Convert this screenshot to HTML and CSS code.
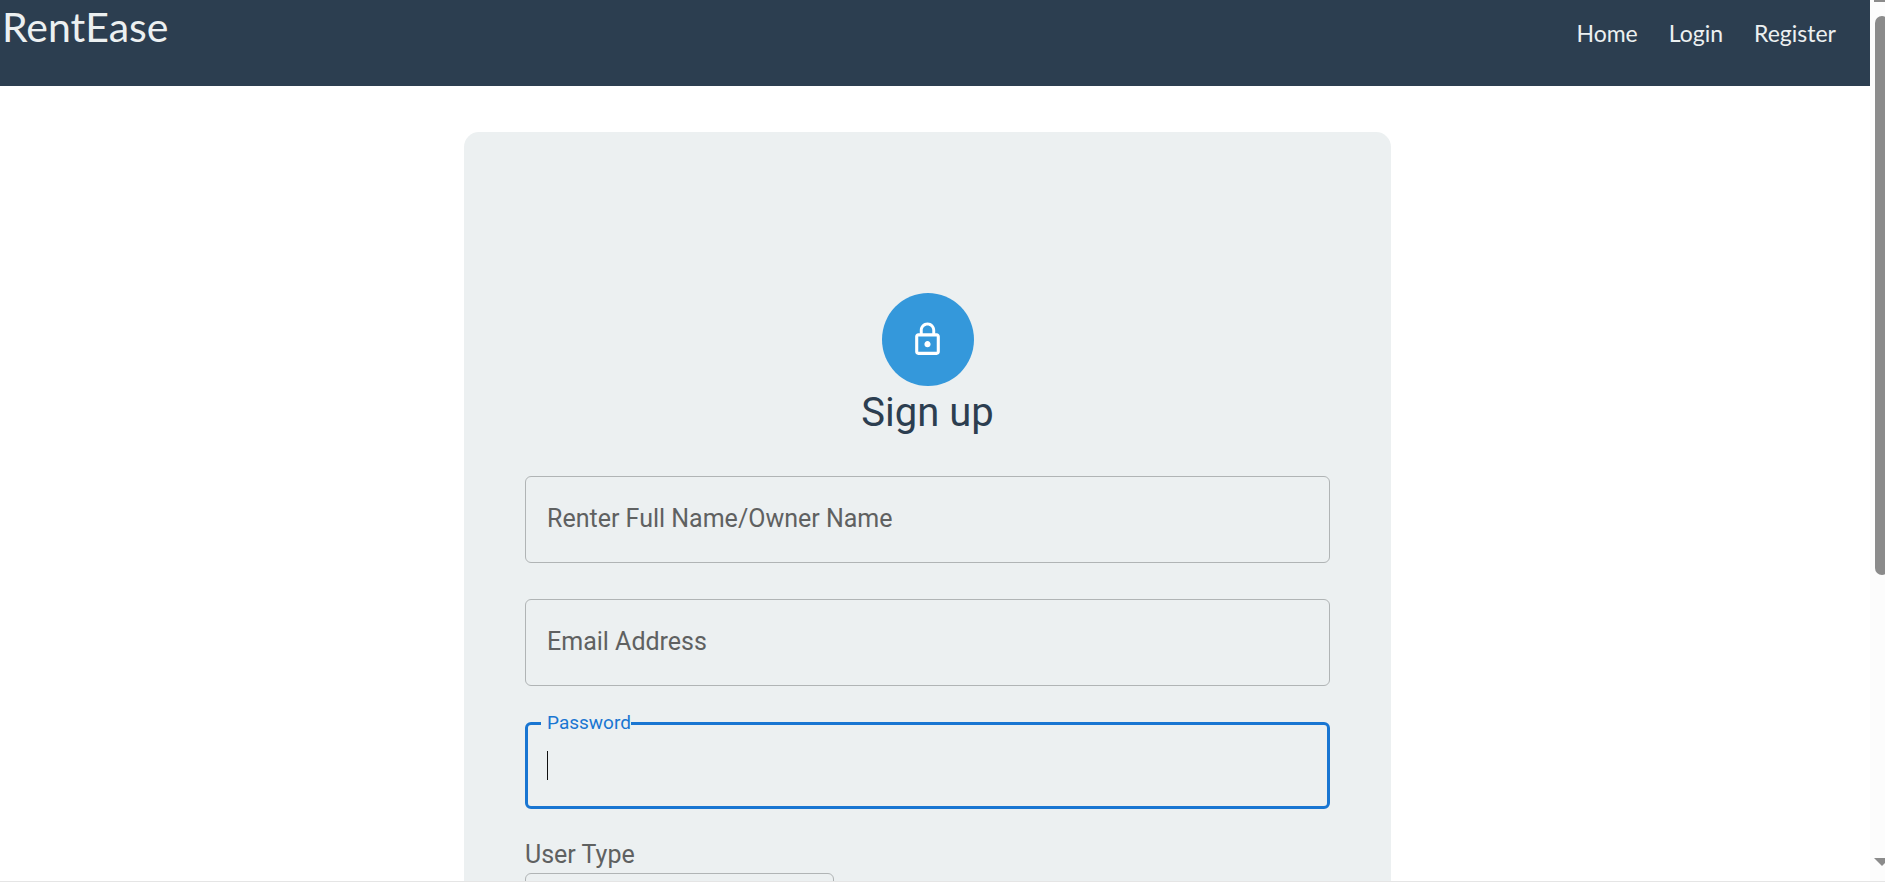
FILE: index.html
```html
<!DOCTYPE html>
<html lang="en">
<head>
<meta charset="utf-8">
<meta name="viewport" content="width=device-width, initial-scale=1">
<title>RentEase</title>
<link rel="stylesheet" href="styles.css">
</head>
<body>
<div class="page">
  <header class="header">
    <div class="brand">RentEase</div>
    <nav class="nav">
      <a href="#home">Home</a>
      <a href="#login">Login</a>
      <a href="#register">Register</a>
    </nav>
  </header>
  <main class="main">
    <form class="card">
      <div class="avatar">
        <svg viewBox="0 0 24 24" aria-hidden="true"><path d="M12 17c1.1 0 2-.9 2-2s-.9-2-2-2-2 .9-2 2 .9 2 2 2zm6-9h-1V6c0-2.760-2.240-5-5-5S7 3.240 7 6v2H6c-1.100 0-2 .9-2 2v10c0 1.100.9 2 2 2h12c1.100 0 2-.9 2-2V10c0-1.100-.9-2-2-2zM8.900 6c0-1.710 1.390-3.100 3.100-3.100s3.100 1.390 3.100 3.100v2H8.900V6zM18 20H6V10h12v10z"/></svg>
      </div>
      <h1 class="title">Sign up</h1>
      <div class="fields">
        <div class="field">
          <label class="field-label" for="name">Renter Full Name/Owner Name</label>
          <input class="field-input" id="name" type="text">
        </div>
        <div class="field">
          <label class="field-label" for="email">Email Address</label>
          <input class="field-input" id="email" type="email">
        </div>
        <div class="field field-active">
          <label class="field-label" for="password">Password</label>
          <input class="field-input" id="password" type="password">
          <span class="caret"></span>
        </div>
      </div>
      <label class="select-label" for="user-type">User Type</label>
      <select class="select" id="user-type"><option></option></select>
    </form>
  </main>
</div>
<div class="scrollbar" aria-hidden="true">
  <div class="scroll-up"></div>
  <div class="scroll-thumb"></div>
  <svg class="scroll-down" viewBox="0 0 16 8"><path d="M0 0h16L8 8z"/></svg>
</div>
</body>
</html>
```
FILE: styles.css
```css
* {
  box-sizing: border-box;
}

body {
  margin: 0;
  height: 100vh;
  display: flex;
  overflow: hidden;
  background: #fff;
  border-bottom: 1px solid #e5e5e5;
  font-family: Roboto, "Liberation Sans", sans-serif;
  color: #2c3e50;
}

.page {
  flex: 1;
  min-width: 0;
  overflow: hidden;
}

.header {
  display: flex;
  justify-content: space-between;
  align-items: flex-start;
  padding: 0 34px 32px 2px;
  background: #2c3e50;
  color: #ecf0f1;
  font-family: "Gill Sans", "Gill Sans MT", Lato, sans-serif;
}

.brand {
  font-size: 41px;
  line-height: 54px;
}

.nav {
  display: flex;
  gap: 31px;
  padding-top: 16px;
  font-size: 23px;
  line-height: 34px;
}

.nav a {
  color: inherit;
  text-decoration: none;
}

.main {
  padding: 46px 31px 46px 16px;
}

.card {
  max-width: 927px;
  margin: 0 auto;
  padding: 161px 61px 61px;
  border-radius: 15px;
  background: #ecf0f1;
}

.avatar {
  display: flex;
  align-items: center;
  justify-content: center;
  width: 92px;
  height: 93px;
  margin: 0 auto;
  border-radius: 50%;
  background: #3498db;
}

.avatar svg {
  width: 37px;
  height: 37px;
  fill: #fff;
}

.title {
  margin: 0 0 37px;
  font-size: 40px;
  font-weight: 400;
  line-height: 53px;
  text-align: center;
}

.fields {
  display: grid;
  gap: 36px;
}

.field {
  position: relative;
}

.field-input {
  display: block;
  width: 100%;
  height: 87px;
  padding: 0 22px;
  border: 1px solid #b0b4b5;
  border-radius: 6px;
  outline: none;
  background: transparent;
  font: inherit;
  font-size: 25px;
}

.field-label {
  position: absolute;
  left: 22px;
  top: 25px;
  font-size: 25px;
  line-height: 36px;
  color: #5f6161;
}

.field-active .field-input {
  border: 3px solid #1976d2;
}

.field-active .field-label {
  left: 16px;
  top: -11px;
  padding-left: 6px;
  background: #ecf0f1;
  font-size: 19px;
  line-height: 24px;
  color: #1976d2;
}

.caret {
  position: absolute;
  left: 22px;
  top: 29px;
  width: 1px;
  height: 29px;
  background: #111;
}

.select-label {
  display: block;
  margin-top: 28px;
  font-size: 25px;
  line-height: 36px;
  color: #5f6161;
}

.select {
  display: block;
  width: 309px;
  height: 87px;
  appearance: none;
  border: 1px solid #b0b4b5;
  border-radius: 6px;
  background: transparent;
}

.scrollbar {
  display: flex;
  flex-direction: column;
  width: 15px;
  padding-left: 4px;
  overflow: hidden;
  background: #fcfcfc;
}

.scroll-up {
  width: 16px;
  height: 2px;
  background: #8b8b8b;
}

.scroll-thumb {
  width: 14px;
  height: 63.4%;
  margin: 14px 0 auto 1px;
  border-radius: 7px;
  background: #8b8b8b;
}

.scroll-down {
  flex: none;
  width: 16px;
  height: 8px;
  margin-bottom: 15px;
  fill: #8b8b8b;
}
```
